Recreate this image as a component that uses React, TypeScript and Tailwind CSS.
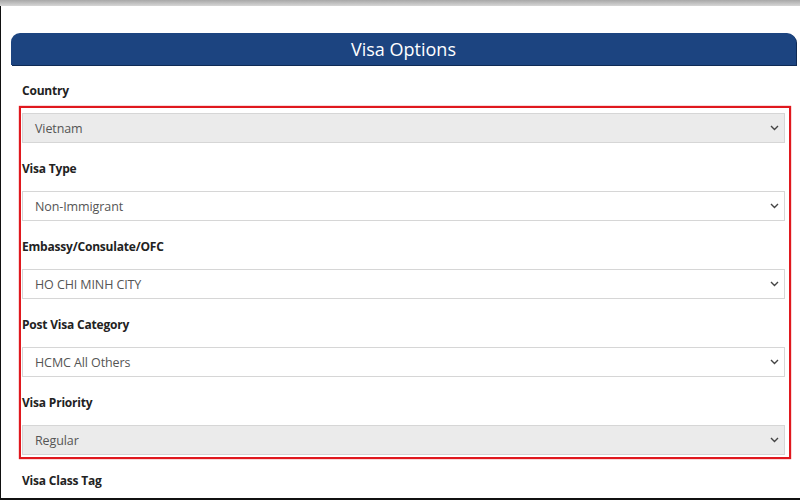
const fields: { label: string; value: string; disabled: boolean }[] = [
  { label: "Visa Type", value: "Non-Immigrant", disabled: false },
  { label: "Embassy/Consulate/OFC", value: "HO CHI MINH CITY", disabled: false },
  { label: "Post Visa Category", value: "HCMC All Others", disabled: false },
  { label: "Visa Priority", value: "Regular", disabled: true },
];

const Chevron = () => (
  <svg width="9" height="6" viewBox="0 0 9 6" className="shrink-0">
    <path d="M1 1l3.5 3.5L8 1" fill="none" stroke="#444" strokeWidth="1.4" />
  </svg>
);

const FakeSelect = ({ value, disabled }: { value: string; disabled: boolean }) => (
  <div
    className={
      "h-[30px] flex items-center justify-between pl-[12px] pr-[5px] border border-[#d6d6d6] text-[12.5px] tracking-[-0.1px] text-[#555] " +
      (disabled ? "bg-[#ebebeb]" : "bg-white")
    }
  >
    <span className="pt-[2px]">{value}</span>
    <Chevron />
  </div>
);

const Label = ({ children }: { children: React.ReactNode }) => (
  <div className="h-[20px] leading-[22px] text-[12px] font-bold tracking-[-0.2px] text-[#222]">{children}</div>
);

export default function App() {
  return (
    <div
      className="w-[800px] h-[500px] bg-white flex flex-col overflow-hidden"
      style={{ fontFamily: '"Open Sans", "Noto Sans", sans-serif' }}
    >
      {/* browser chrome strip */}
      <div className="h-[6px] shrink-0 bg-gradient-to-b from-[#a8a8a8] to-[#d6d6d6]" />

      <div className="flex-1 flex flex-col border-l border-b-2 border-[#111]">
        {/* Header */}
        <div className="mt-[27px] ml-[10px] mr-[4px] h-[32px] rounded-t-[9px] bg-[#1c4480] shadow-[1px_1px_0_#0e2a55] flex items-center justify-center">
          <span className="text-white text-[18px] leading-none">Visa Options</span>
        </div>

        <div className="pl-[21px] mt-[15px]">
          <Label>Country</Label>
        </div>

        {/* highlighted group */}
        <div className="mt-[6px] ml-[18px] w-[772px] border-2 border-[#e0181e] shadow-[0_0_1px_#e0181e] pt-[5px] pb-[2px] pl-[1px] pr-[4px]">
          <FakeSelect value="Vietnam" disabled />
          {fields.map((f) => (
            <div key={f.label} className="mt-[15px]">
              <Label>{f.label}</Label>
              <div className="mt-[13px]">
                <FakeSelect value={f.value} disabled={f.disabled} />
              </div>
            </div>
          ))}
        </div>

        <div className="pl-[21px] mt-[11px]">
          <Label>Visa Class Tag</Label>
        </div>
      </div>
    </div>
  );
}
